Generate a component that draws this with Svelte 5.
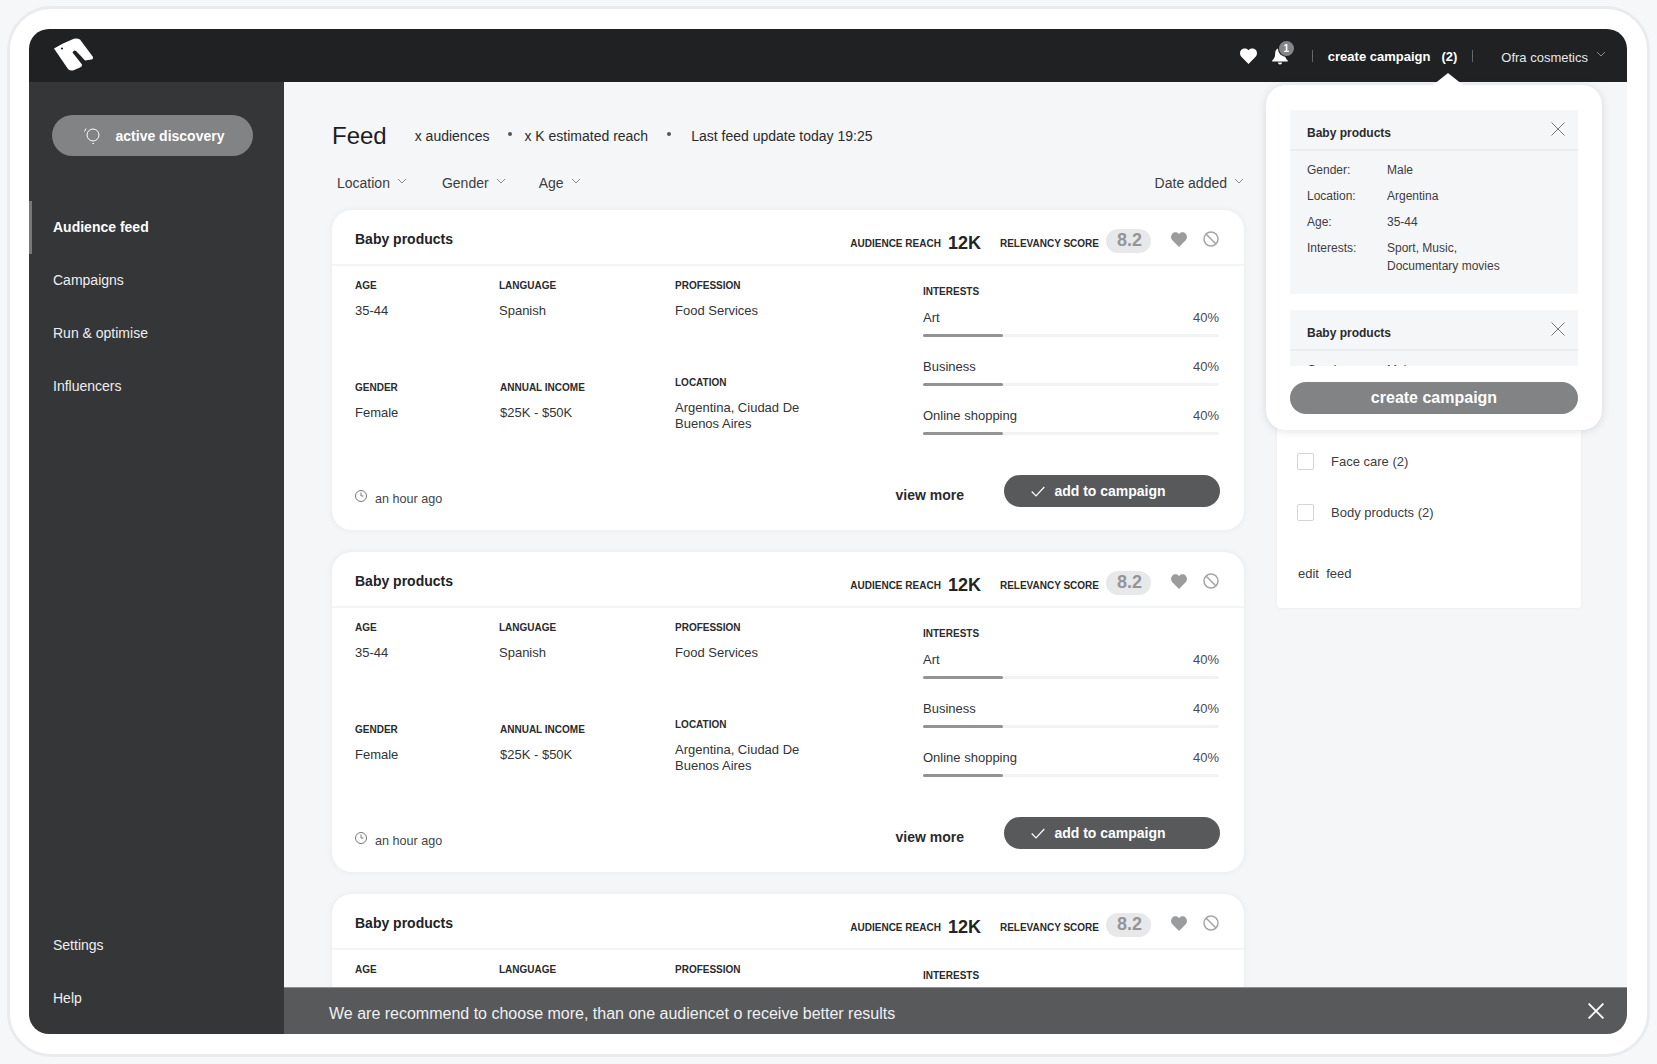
<script>
    const navTop = ['Audience feed', 'Campaigns', 'Run & optimise', 'Influencers'];
    const navBottom = ['Settings', 'Help'];
    const interests = ['Art', 'Business', 'Online shopping'];
    const cards = [1, 2, 3];
    const summary = [
        ['Gender:', 'Male'],
        ['Location:', 'Argentina'],
        ['Age:', '35-44'],
        ['Interests:', 'Sport, Music,\nDocumentary movies']
    ];
</script>

{#snippet chevron()}
    <svg class="chev" viewBox="0 0 10 6" width="10" height="6"><path d="M1 1l4 4 4-4" fill="none" stroke="#8a8b8d" stroke-width="1"/></svg>
{/snippet}

{#snippet cross(size, color, width)}
    <svg viewBox="0 0 14 14" width={size} height={size}><path d="M.5.5l13 13M13.5.5l-13 13" fill="none" stroke={color} stroke-width={width}/></svg>
{/snippet}

<div class="frame">
    <div class="app">
        <header class="topbar">
            <svg class="logo" viewBox="0 0 40 34" width="40" height="34">
                <path d="M0 11.500 9 6.500 17 3Q22 .5 26 2.500L39 20Q39.500 22 37.500 22.500L31 23.500Q27 19 22 14 20 12.500 18.500 15.500L28 27.500Q28.500 29.500 26 30.500L19 33.500Q16 34 14 32Z" fill="#fff"/>
                <circle cx="8" cy="11.500" r="1.100" fill="#202123"/>
            </svg>
            <div class="top-right">
                <svg viewBox="0 0 16 15" width="17" height="16"><path d="M8 15 1.300 8.200C-.4 6.400-.4 3.500 1.300 1.700 3-.1 5.900-.1 7.600 1.700L8 2.200l.4-.5c1.700-1.800 4.600-1.800 6.300 0 1.700 1.800 1.700 4.700 0 6.500Z" fill="#fff"/></svg>
                <div class="bell">
                    <svg viewBox="0 0 16 18" width="16" height="18"><path d="M8 1C5 1 3.200 3.300 3.200 6.300c0 4-1.200 5.500-3 7.200V14.500h15.600v-1C14 11.800 12.800 10.300 12.800 6.300 12.800 3.300 11 1 8 1ZM6 15.500h4a2 2 0 0 1-4 0Z" fill="#fff"/></svg>
                    <span class="badge">1</span>
                </div>
                <span class="sep"></span>
                <span class="create">create campaign<b>(2)</b></span>
                <span class="sep second"></span>
                <span class="brand">Ofra cosmetics</span>
                {@render chevron()}
            </div>
        </header>

        <div class="shell">
            <aside class="sidebar">
                <button class="discovery">
                    <svg viewBox="0 0 18 18" width="18" height="18"><circle cx="10" cy="8" r="6" fill="none" stroke="#fff" stroke-width="1"/><path d="M1.500 4.500l1.500-3M9.500 16.500h1.500" fill="none" stroke="#fff" stroke-width="1"/></svg>
                    active discovery
                </button>
                <nav class="nav">
                    {#each navTop as item, i}
                        <div class="nav-item" class:active={i === 0}>{item}</div>
                    {/each}
                </nav>
                <nav class="nav bottom">
                    {#each navBottom as item}
                        <div class="nav-item">{item}</div>
                    {/each}
                </nav>
            </aside>

            <main class="main">
                <section class="feed">
                    <div class="feed-head">
                        <h1>Feed</h1>
                        <span class="stat first">x audiences</span>
                        <i class="dot near"></i>
                        <span class="stat">x K estimated reach</span>
                        <i class="dot"></i>
                        <span class="stat">Last feed update today 19:25</span>
                    </div>
                    <div class="filters">
                        <span class="filter loc">Location {@render chevron()}</span>
                        <span class="filter gen">Gender {@render chevron()}</span>
                        <span class="filter">Age {@render chevron()}</span>
                        <span class="filter sort">Date added {@render chevron()}</span>
                    </div>

                    {#each cards as card (card)}
                        <article class="card">
                            <div class="card-head">
                                <h2>Baby products</h2>
                                <div class="metrics">
                                    <span class="label">AUDIENCE REACH</span>
                                    <strong class="reach">12K</strong>
                                    <span class="label">RELEVANCY SCORE</span>
                                    <span class="score">8.2</span>
                                    <svg class="heart" viewBox="0 0 16 15" width="16" height="15"><path d="M8 15 1.300 8.200C-.4 6.400-.4 3.500 1.300 1.700 3-.1 5.900-.1 7.600 1.700L8 2.200l.4-.5c1.700-1.800 4.600-1.800 6.300 0 1.700 1.800 1.700 4.700 0 6.500Z" fill="#9b9c9e"/></svg>
                                    <svg class="ban" viewBox="0 0 16 16" width="16" height="16"><circle cx="8" cy="8" r="7" fill="none" stroke="#a3a4a6" stroke-width="1.500"/><path d="M3 3l10 10" stroke="#a3a4a6" stroke-width="1.500"/></svg>
                                </div>
                            </div>
                            <div class="card-body">
                                <div class="facts">
                                    <div><span class="label">AGE</span><p>35-44</p></div>
                                    <div><span class="label">LANGUAGE</span><p>Spanish</p></div>
                                    <div><span class="label">PROFESSION</span><p>Food Services</p></div>
                                    <div><span class="label">GENDER</span><p>Female</p></div>
                                    <div class="income"><span class="label">ANNUAL INCOME</span><p>$25K - $50K</p></div>
                                    <div class="location"><span class="label">LOCATION</span><p>Argentina, Ciudad De<br />Buenos Aires</p></div>
                                </div>
                                <div class="interests">
                                    <span class="label">INTERESTS</span>
                                    {#each interests as name}
                                        <div class="interest">
                                            <div class="interest-row"><span>{name}</span><span class="pct">40%</span></div>
                                            <div class="track"><div class="fill" style="width: 27%"></div></div>
                                        </div>
                                    {/each}
                                </div>
                            </div>
                            <div class="card-foot">
                                <span class="ago">
                                    <svg viewBox="0 0 12 12" width="12" height="12"><circle cx="6" cy="6" r="5.500" fill="none" stroke="#555" stroke-width=".8"/><path d="M6 2.500V6h2.500" fill="none" stroke="#555" stroke-width=".8"/></svg>
                                    an hour ago
                                </span>
                                <span class="more">view more</span>
                                <button class="add">
                                    <svg viewBox="0 0 14 11" width="14" height="11"><path d="M.7 5.500l4.300 4.300L13.300 1" fill="none" stroke="#fff" stroke-width="1.200"/></svg>
                                    add to campaign
                                </button>
                            </div>
                        </article>
                    {/each}
                </section>

                <section class="panel">
                    <label class="check"><span class="box"></span>Face care (2)</label>
                    <label class="check"><span class="box"></span>Body products (2)</label>
                    <div class="edit">edit&nbsp; feed</div>
                </section>
            </main>
        </div>

        <div class="notice">
            <span>We are recommend to choose more, than one audiencet o receive better results</span>
            {@render cross(16, '#fff', 1.6)}
        </div>

        <div class="popup">
            <div class="arrow"></div>
            <div class="popup-list">
                {#each [1, 2] as group (group)}
                    <div class="group">
                        <div class="group-head">
                            <h3>Baby products</h3>
                            {@render cross(14, '#77787a', 1)}
                        </div>
                        <dl>
                            {#each summary as [key, value]}
                                <dt>{key}</dt>
                                <dd>{value}</dd>
                            {/each}
                        </dl>
                    </div>
                {/each}
            </div>
            <button class="create-btn">create campaign</button>
        </div>
    </div>
</div>

<style>
    :global(body) { margin: 0; background: #f6f7f9; }
    .frame {
        box-sizing: border-box;
        width: 1643px;
        height: 1051px;
        margin: 6px 0 0 7px;
        padding: 20px 20px 20px 19px;
        background: #fff;
        border: 3px solid #eaebee;
        border-radius: 44px;
        font-family: "Liberation Sans", Arial, sans-serif;
        color: #2a2b2d;
    }
    .app {
        position: relative;
        display: flex;
        flex-direction: column;
        width: 1598px;
        height: 1005px;
        border-radius: 20px;
        overflow: hidden;
    }
    .topbar {
        display: flex;
        align-items: center;
        justify-content: space-between;
        flex: 0 0 53px;
        padding: 0 21px 0 25px;
        background: #202123;
        color: #fff;
    }
    .logo { margin-top: -4px; }
    .top-right { display: flex; align-items: center; font-size: 13px; }
    .bell { position: relative; display: flex; margin-left: 15px; }
    .badge {
        position: absolute; top: -6px; right: -6px;
        width: 15px; height: 15px; border-radius: 50%;
        background: #848587; box-shadow: 0 0 0 1px #202123;
        font-size: 10px; font-weight: 700;
        line-height: 15px; text-align: center;
    }
    .sep { width: 1px; height: 12px; margin: 0 15px 0 24px; background: #666769; }
    .sep.second { margin-left: 15px; margin-right: 28px; }
    .create { font-weight: 700; margin-top: 2px; }
    .create b { margin-left: 11px; }
    .brand { margin: 3px 8px 0 0; color: #e8e8e9; }

    .shell { display: flex; flex: 1; min-height: 0; }
    .sidebar {
        display: flex;
        flex-direction: column;
        flex: 0 0 255px;
        background: #353638;
        color: #eeeeef;
    }
    .discovery {
        display: flex; align-items: center; justify-content: center; gap: 15px;
        width: 201px; height: 41px; margin: 33px 0 0 23px; padding: 0 0 0 2px;
        border: 0; border-radius: 21px;
        background: #828385; color: #fff;
        font: 700 14px "Liberation Sans", Arial, sans-serif;
    }
    .nav { margin-top: 45px; }
    .nav.bottom { margin-top: auto; margin-bottom: 9px; }
    .nav-item {
        height: 53px; padding-left: 24px;
        font-size: 14px; line-height: 53px;
    }
    .nav-item.active { padding-left: 21px; border-left: 3px solid #77787a; font-weight: 700; color: #fff; }

    .main {
        display: flex; gap: 33px; flex: 1; min-width: 0;
        padding-left: 48px;
        background: #f5f6f8;
        overflow: hidden;
    }
    .feed { flex: 0 0 912px; }
    .feed-head { display: flex; align-items: center; height: 28px; margin-top: 40px; }
    h1 { margin: 0 0 1px; font-size: 24px; font-weight: 400; color: #1c1d1f; }
    .stat { font-size: 14px; color: #2a2b2d; }
    .stat.first { margin-left: 28px; }
    .dot { width: 4px; height: 4px; margin: -4px 20px 0 19px; border-radius: 50%; background: #555; }
    .dot.near { margin-right: 12px; }
    .filters { display: flex; align-items: center; height: 20px; margin: 23px 0 17px; padding-left: 5px; font-size: 14px; color: #3c3d3f; }
    .filter { display: flex; align-items: center; gap: 7px; margin-right: 35px; }
    .filter.gen { margin-right: 33px; }
    .filter.loc { margin-right: 35px; }
    .filter.sort { margin: 0 0 0 auto; }
    .chev { flex: none; margin-top: -4px; }

    .card {
        display: flex; flex-direction: column;
        box-sizing: border-box;
        height: 320px; margin-bottom: 22px;
        background: #fff;
        border-radius: 20px;
        box-shadow: 0 0 6px rgba(60, 64, 72, 0.08);
    }
    .card-head {
        display: flex; align-items: center; justify-content: space-between;
        flex: 0 0 56px; box-sizing: border-box;
        padding: 7px 25px 0 23px;
        border-bottom: 2px solid #f3f4f5;
    }
    h2 { margin: 0 0 3px; font-size: 14px; font-weight: 700; color: #222325; }
    .metrics { display: flex; align-items: center; }
    .label { display: block; font-size: 10px; font-weight: 700; line-height: 12px; color: #2a2b2d; }
    .metrics .label { margin-top: 7px; }
    .reach { margin: 6px 19px 0 7px; font-size: 18px; color: #222325; }
    .score {
        width: 45px; height: 24px; margin: 0 20px 0 7px;
        border-radius: 12px; background: #e7e8ea;
        font-size: 18px; font-weight: 700; line-height: 23px; text-align: center; text-indent: 2px; color: #949597;
    }
    .heart { margin: -3px 16px 0 0; }
    .ban { margin-top: -3px; }

    .card-body { display: flex; padding: 14px 25px 0 23px; }
    .facts {
        display: grid;
        grid-template-columns: 144px 176px 248px;
        grid-template-rows: 102px auto;
        flex: 0 0 568px;
    }
    .facts p { margin: 11px 0 0; font-size: 13px; line-height: 16px; color: #333436; }
    .facts .income { padding-left: 1px; }
    .facts .location { margin-top: -5px; }
    .interests { flex: 1; padding-top: 6px; }
    .interests .label { margin-bottom: 12px; }
    .interest { height: 49px; }
    .interest-row { display: flex; justify-content: space-between; font-size: 13px; line-height: 16px; color: #333436; }
    .pct { color: #4a4b4d; }
    .track { height: 3px; margin-top: 8px; background: #f1f2f3; border-radius: 2px; }
    .fill { height: 100%; background: #929395; border-radius: 2px; }

    .card-foot {
        display: flex; align-items: flex-end;
        margin-top: auto; padding: 0 24px 23px 23px;
    }
    .ago { display: flex; align-items: flex-start; gap: 8px; font-size: 12.600px; line-height: 16px; color: #444547; }
    .ago svg { margin-top: -1px; }
    .more { margin: 0 40px 4px auto; font-size: 14px; font-weight: 700; color: #2a2b2d; }
    .add {
        display: flex; align-items: center; justify-content: center; gap: 9px;
        width: 216px; height: 32px; padding: 0 27px 0 0;
        border: 0; border-radius: 16px;
        background: #58595b; color: #fff;
        font: 700 14px "Liberation Sans", Arial, sans-serif;
    }

    .panel {
        flex: 0 0 304px; box-sizing: border-box;
        height: 399px; margin-top: 127px;
        padding: 244px 20px 0;
        background: #fff; border-radius: 4px;
        box-shadow: 0 0 4px rgba(60, 64, 72, 0.06);
        font-size: 13px; color: #3c3d3f;
    }
    .check { display: flex; align-items: center; height: 17px; margin-bottom: 34px; }
    .box {
        box-sizing: border-box; width: 17px; height: 17px; margin-right: 17px;
        border: 1px solid #d4d5d7; border-radius: 2px; background: #fff;
    }
    .edit { margin: 45px 0 0 1px; line-height: 16px; }

    .notice {
        position: absolute; left: 255px; right: 0; bottom: 0;
        display: flex; align-items: center; justify-content: space-between;
        box-sizing: border-box; height: 47px; padding: 0 23px 0 45px;
        background: #58595b; color: #f0f0f1;
        border-top: 1px solid #8e8f91;
        font-size: 16px;
    }
    .notice span { margin-top: 6px; }

    .popup {
        position: absolute; top: 56px; right: 25px;
        box-sizing: border-box; width: 336px; height: 345px;
        padding: 25px 24px 16px;
        background: #fff; border-radius: 20px;
        box-shadow: 0 1px 8px rgba(60, 64, 72, 0.16);
    }
    .arrow {
        position: absolute; top: -12px; left: 167px;
        width: 0; height: 0;
        border: solid transparent; border-width: 0 15px 12px; border-bottom-color: #fff;
    }
    .popup-list { height: 256px; overflow: hidden; }
    .group { height: 184px; margin-bottom: 16px; background: #f5f6f8; }
    .group-head {
        display: flex; justify-content: space-between;
        box-sizing: border-box; height: 41px; padding: 12px 13px 0 17px;
        border-bottom: 2px solid #ebecee;
    }
    h3 { margin: 4px 0 0; font-size: 12px; font-weight: 700; color: #2a2b2d; }
    dl {
        display: grid; grid-template-columns: 80px 1fr; row-gap: 8px;
        margin: 0; padding: 10px 17px 0;
        font-size: 12px; line-height: 18px; color: #3c3d3f;
    }
    dd { margin: 0; white-space: pre-line; }
    .create-btn {
        display: block; width: 288px; height: 32px; margin-top: 16px; padding: 0;
        border: 0; border-radius: 16px;
        background: #828385; color: #fff;
        font: 700 16px "Liberation Sans", Arial, sans-serif;
    }
</style>
